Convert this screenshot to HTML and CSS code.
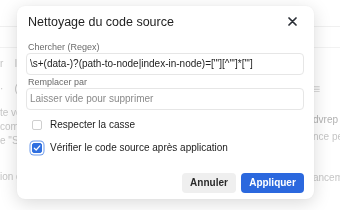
FILE: index.html
```html
<!DOCTYPE html>
<html lang="fr">
<head>
    <meta charset="UTF-8">
    <meta name="viewport" content="width=device-width, initial-scale=1.0">
    <title>Nettoyage du code source</title>
    <link rel="stylesheet" href="styles.css">
</head>
<body>
    <!-- page en arrière-plan (floutée) -->
    <div class="page">
        <div class="page-top"></div>
        <div class="page-sub"></div>
        <div class="page-body">
            <div class="side side-left">
                <p class="l-in">r&nbsp;&nbsp;&nbsp;&nbsp;In</p>
                <p class="l-par">·&nbsp;&nbsp;&nbsp;&nbsp;(</p>
                <p class="l-note">te vo</p>
                <p>comme</p>
                <p>e "Su</p>
                <p class="l-end">ion de</p>
            </div>
            <div class="middle"></div>
            <div class="side side-right">
                <p class="r-menu">&#8801;</p>
                <p class="r-dark">dvrep</p>
                <p class="r-next">nce pe</p>
                <p class="r-end">ancem</p>
            </div>
        </div>
    </div>

    <div class="overlay">
        <div class="dialog">
            <div class="dialog-head">
                <h2>Nettoyage du code source</h2>
                <button class="close" aria-label="Fermer">
                    <svg width="9" height="9" viewBox="0 0 9 9">
                        <path d="M1 1 L8 8 M8 1 L1 8" stroke="#2b2f36" stroke-width="1.7" stroke-linecap="round"/>
                    </svg>
                </button>
            </div>

            <label class="field-label">Chercher (Regex)</label>
            <input class="field" type="text" value="\s+(data-)?(path-to-node|index-in-node)=[&quot;'][^&quot;']*[&quot;']">

            <label class="field-label">Remplacer par</label>
            <input class="field" type="text" placeholder="Laisser vide pour supprimer">

            <div class="check-row">
                <span class="box"></span>
                <span>Respecter la casse</span>
            </div>
            <div class="check-row">
                <span class="box checked">
                    <svg width="8" height="8" viewBox="0 0 8 8">
                        <path d="M1.3 4.2 L3.2 6 L6.8 1.8" fill="none" stroke="#fff" stroke-width="1.2" stroke-linecap="round" stroke-linejoin="round"/>
                    </svg>
                </span>
                <span>Vérifier le code source après application</span>
            </div>

            <div class="actions">
                <button class="btn btn-cancel">Annuler</button>
                <button class="btn btn-apply">Appliquer</button>
            </div>
        </div>
    </div>
</body>
</html>
```

FILE: styles.css
```css
* {
    margin: 0;
    padding: 0;
    box-sizing: border-box;
}

body {
    width: 340px;
    height: 210px;
    overflow: hidden;
    font-family: 'Liberation Sans', Arial, sans-serif;
    background: #fff;
    color: #222;
}

/* page de fond */
.page {
    height: 210px;
    display: flex;
    flex-direction: column;
    filter: blur(0.6px);
    color: #c6c6c6;
    font-size: 10px;
}

.page-top {
    height: 27px;
    border-bottom: 1px solid #f0f0f0;
}

.page-sub {
    height: 21px;
    border-bottom: 1px solid #f2f2f2;
}

.page-body {
    flex: 1;
    display: flex;
}

.side {
    display: flex;
    flex-direction: column;
    white-space: nowrap;
}

.side p {
    height: 14px;
    line-height: 14px;
}

.side-left {
    width: 30px;
}

.l-in {
    margin-top: 9px;
}

.l-par {
    margin-top: 11px;
}

.l-note {
    margin-top: 10px;
}

.l-end {
    margin-top: 22px;
}

.side-right {
    width: 30px;
    padding-left: 3px;
}

.r-menu {
    margin-top: 34px;
    font-size: 12px;
    color: #d0d0d0;
}

.r-dark {
    margin-top: 17px;
    color: #b2b2b2;
}

.r-next {
    margin-top: 3px;
}

.r-end {
    margin-top: 27px;
}

.middle {
    flex: 1;
}

/* boîte de dialogue */
.overlay {
    position: fixed;
    inset: 0;
    display: flex;
    align-items: center;
    justify-content: center;
    padding: 0 9px 6px 0;
}

.dialog {
    width: 297px;
    background: #fff;
    border-radius: 8px;
    box-shadow: 0 4px 18px rgba(0, 0, 0, 0.15), 0 0 2px rgba(0, 0, 0, 0.06);
    padding: 8px 10px 6px 9px;
    display: flex;
    flex-direction: column;
}

.dialog-head {
    display: flex;
    justify-content: space-between;
    align-items: center;
    height: 16px;
    padding-left: 2px;
}

.dialog-head h2 {
    font-size: 12.5px;
    font-weight: normal;
    color: #222;
}

.close {
    border: none;
    background: none;
    width: 16px;
    height: 16px;
    display: flex;
    align-items: center;
    justify-content: center;
    margin-right: 4px;
}

.field-label {
    font-size: 9px;
    color: #6b6b6b;
    line-height: 12px;
    margin-top: 11px;
    padding-left: 2px;
}

.field {
    height: 22px;
    border: 1px solid #e6e6e6;
    border-radius: 4px;
    padding: 0 3px;
    font-family: 'Liberation Sans', Arial, sans-serif;
    font-size: 10px;
    color: #222;
    outline: none;
}

.field + .field-label {
    margin-top: 1px;
}

.field::placeholder {
    color: #8a8a8a;
}

.check-row {
    display: flex;
    align-items: center;
    gap: 8px;
    height: 16px;
    margin-top: 7px;
    padding-left: 6px;
    font-size: 10px;
    color: #222;
}

.check-row + .check-row {
    margin-top: 7px;
}

.box {
    width: 10px;
    height: 10px;
    border: 1px solid #cfcfcf;
    border-radius: 2px;
    background: #fff;
    display: flex;
    align-items: center;
    justify-content: center;
}

.box.checked {
    background: #2f6fe0;
    border-color: #2f6fe0;
    box-shadow: 0 0 0 1.5px #fff, 0 0 0 2.5px #6c9aea;
}

.actions {
    display: flex;
    justify-content: flex-end;
    gap: 5px;
    margin-top: 17px;
}

.btn {
    height: 20px;
    border: none;
    border-radius: 4px;
    font-family: 'Liberation Sans', Arial, sans-serif;
    font-size: 10px;
    font-weight: bold;
}

.btn-cancel {
    width: 54px;
    background: #efefef;
    color: #2a2a2a;
}

.btn-apply {
    width: 63px;
    background: #2b68de;
    color: #fff;
}
```
